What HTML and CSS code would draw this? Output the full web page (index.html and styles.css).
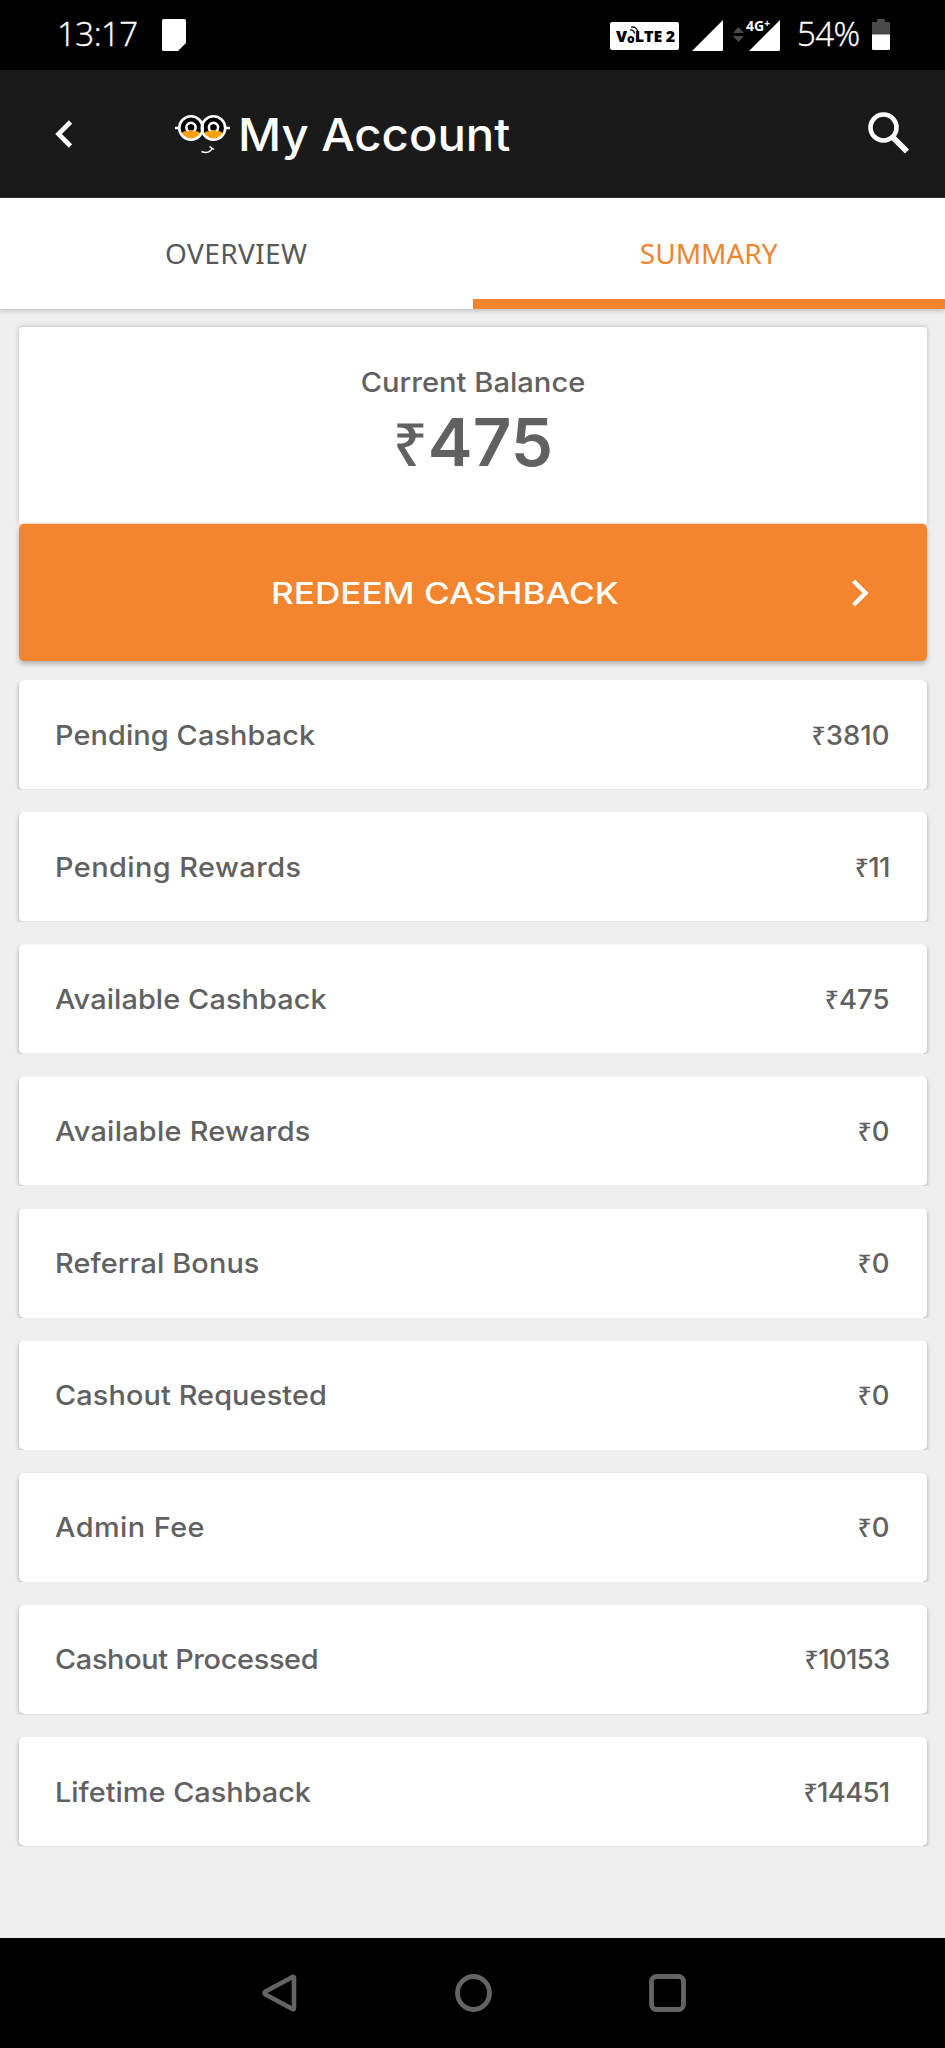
FILE: index.html
```
<!DOCTYPE html>
<html lang="en">
<head>
<meta charset="utf-8">
<title>My Account</title>
<link rel="stylesheet" href="styles.css">
</head>
<body>
<div class="screen">
  <div class="status">
    <span class="clock">13:17</span>
    <svg class="note" width="24" height="32" viewBox="0 0 24 32"><path d="M1.500 0H22.500Q24 0 24 1.500V24L16 32H1.500Q0 32 0 30.500V1.500Q0 0 1.500 0Z" fill="#fff"/></svg>
    <div class="status-right">
      <div class="volte"><span class="vo">V</span><span class="ring">o<svg class="waves" width="9" height="8" viewBox="0 0 9 8"><path d="M0 4.200Q3.500 3 4.500 7.500M1 1.200Q6.500 0 7.700 5.500" fill="none" stroke="#000" stroke-width="1.300"/></svg></span><span class="lte">LTE</span><span class="sim">2</span></div>
      <svg class="signal" width="31" height="31" viewBox="0 0 31 31"><path d="M0 31L31 0V29.500Q31 31 29.500 31Z" fill="#fff"/></svg>
      <svg class="updown" width="11" height="15" viewBox="0 0 11 15"><path d="M0 6L5.500 0L11 6ZM0 9L5.500 15L11 9Z" fill="#4a4a4a"/></svg>
      <div class="signal-g"><svg width="31" height="31" viewBox="0 0 31 31"><path d="M0 31L31 0V29.500Q31 31 29.500 31Z" fill="#fff"/></svg><span class="net">4G<sup>+</sup></span></div>
      <span class="percent">54%</span>
      <svg class="battery" width="18" height="31" viewBox="0 0 18 31"><path d="M5 0H13V3H17Q18 3 18 4V16H0V4Q0 3 1 3H5Z" fill="#4a4a4a"/><path d="M0 15.500H18V29.500Q18 31 16.500 31H1.500Q0 31 0 29.500Z" fill="#fff"/></svg>
    </div>
  </div>
  <header class="appbar">
    <svg class="back" width="18" height="28" viewBox="0 0 18 28"><path d="M15.500 2L3.500 14L15.500 26" fill="none" stroke="#fff" stroke-width="4.600"/></svg>
    <svg class="logo" width="55" height="40" viewBox="0 0 55 40">
      <path d="M0 13H5M50 13H55" stroke="#fff" stroke-width="2.500"/>
      <circle cx="16" cy="13" r="12" fill="#000"/><circle cx="38.500" cy="13" r="12" fill="#000"/>
      <circle cx="16" cy="12.500" r="4.600" fill="none" stroke="#fff" stroke-width="2.600"/><circle cx="38.500" cy="12.500" r="4.600" fill="none" stroke="#fff" stroke-width="2.600"/>
      <path d="M16 9.500V14M14 12.300H18M38.500 9.500V14M36.500 12.300H40.500" stroke="#000" stroke-width="1.800"/>
      <path d="M6 19Q9 15 12.500 16.500Q16 14 19.500 16.500Q23 15 26 19Q22 25 16 25Q10 25 6 19ZM28.500 19Q31.500 15 35 16.500Q38.500 14 42 16.500Q45.500 15 48.500 19Q44.500 25 38.500 25Q32.500 25 28.500 19Z" fill="#ffa007"/>
      <circle cx="16" cy="13" r="11.700" fill="none" stroke="#fff" stroke-width="2.600"/><circle cx="38.500" cy="13" r="11.700" fill="none" stroke="#fff" stroke-width="2.600"/>
      <path d="M26.500 36.500Q34 39.500 37.500 33M34.500 31.500L39 34.500" fill="none" stroke="#fff" stroke-width="1.500"/>
    </svg>
    <h1 class="title">My Account</h1>
    <svg class="search" width="42" height="42" viewBox="0 0 42 42"><circle cx="15.500" cy="15.500" r="13" fill="none" stroke="#fff" stroke-width="4.600"/><path d="M25.500 26L39 39.500" stroke="#fff" stroke-width="5.600"/></svg>
  </header>
  <nav class="tabs">
    <div class="tab"><span class="tab-a">OVERVIEW</span></div>
    <div class="tab active"><span class="tab-b">SUMMARY</span></div>
  </nav>
  <main class="content">
    <section class="balance">
      <div class="balance-label">Current Balance</div>
      <div class="balance-value"><span class="rs-big">₹</span>475</div>
    </section>
    <div class="redeem">
      <span class="redeem-label">REDEEM CASHBACK</span>
      <svg class="go" width="18" height="28" viewBox="0 0 18 28"><path d="M2.500 2L14.500 14L2.500 26" fill="none" stroke="#fff" stroke-width="4.400"/></svg>
    </div>
    <div class="rows">
      <div class="row"><span class="name">Pending Cashback</span><span class="amount"><span class="rs">₹</span>3810</span></div>
      <div class="row"><span class="name">Pending Rewards</span><span class="amount"><span class="rs">₹</span>11</span></div>
      <div class="row"><span class="name">Available Cashback</span><span class="amount"><span class="rs">₹</span>475</span></div>
      <div class="row"><span class="name">Available Rewards</span><span class="amount"><span class="rs">₹</span>0</span></div>
      <div class="row"><span class="name">Referral Bonus</span><span class="amount"><span class="rs">₹</span>0</span></div>
      <div class="row"><span class="name">Cashout Requested</span><span class="amount"><span class="rs">₹</span>0</span></div>
      <div class="row"><span class="name">Admin Fee</span><span class="amount"><span class="rs">₹</span>0</span></div>
      <div class="row"><span class="name">Cashout Processed</span><span class="amount"><span class="rs">₹</span>10153</span></div>
      <div class="row"><span class="name">Lifetime Cashback</span><span class="amount"><span class="rs">₹</span>14451</span></div>
    </div>
  </main>
  <footer class="navbar">
    <svg width="35" height="38" viewBox="0 0 35 38"><path d="M30.500 3Q32 2.500 32 4V34Q32 35.500 30.500 35L3.500 20.500Q2 19 3.500 17.500Z" fill="none" stroke="#646464" stroke-width="4.600" stroke-linejoin="round"/></svg>
    <svg width="37" height="38" viewBox="0 0 37 38"><ellipse cx="18.500" cy="19" rx="16" ry="16.500" fill="none" stroke="#646464" stroke-width="4.800"/></svg>
    <svg width="37" height="38" viewBox="0 0 37 38"><rect x="2.500" y="2.500" width="32" height="33" rx="5" fill="none" stroke="#646464" stroke-width="4.800"/></svg>
  </footer>
</div>
</body>
</html>
```
FILE: styles.css
```
* { box-sizing: border-box; }
body { margin: 0; background: #efefef; font-family: Inter, "Open Sans", sans-serif; color: #616161; }
svg { display: block; flex: none; }
.screen { width: 945px; height: 2048px; display: flex; flex-direction: column; overflow: hidden; }

.status { height: 70px; background: #000; color: #fff; display: flex; padding: 0 55px 0 57px; flex: none; }
.clock { font: 300 33px/68px "Open Sans", sans-serif; width: 105px; letter-spacing: -0.5px; white-space: nowrap; -webkit-text-stroke: .4px #fff; }
.note { margin-top: 19px; }
.status-right { margin-left: auto; display: flex; }
.volte { position: relative; width: 69px; height: 28px; margin-top: 22px; padding: 0 4px 0 6px; background: #fff; color: #000; border-radius: 2px; display: flex; align-items: center; font: 800 16px/28px "Open Sans", sans-serif; }
.ring { position: relative; font-size: 12px; padding-top: 5px; }
.waves { position: absolute; left: 3px; top: 6px; }
.sim { margin-left: auto; }
.signal { margin: 20px 0 0 13px; }
.updown { margin: 27px 0 0 10px; }
.signal-g { position: relative; margin: 20px 0 0 5px; }
.net { position: absolute; left: -3px; top: -2px; font: 700 14px/16px "Noto Sans", sans-serif; white-space: nowrap; }
.net sup { font-size: 10px; line-height: 0; vertical-align: 4px; }
.percent { font: 300 33px/67px "Open Sans", sans-serif; margin-left: 17px; width: 64px; letter-spacing: -0.6px; white-space: nowrap; -webkit-text-stroke: .4px #fff; }
.battery { margin: 19px 0 0 11px; }

.appbar { height: 128px; background: #1a1a1a; color: #fff; display: flex; align-items: flex-start; padding: 0 35px 0 55px; flex: none; border-bottom: 1px solid #333; }
.back { margin-top: 50px; }
.logo { margin: 45px 0 0 102px; }
.title { margin: 0 0 0 8px; font-weight: 500; font-size: 45px; line-height: 129px; white-space: nowrap; transform: scaleX(1.05); transform-origin: left; }
.search { margin: 42px 0 0 auto; }

.tabs { position: relative; height: 111px; background: #fff; display: flex; flex: none; box-shadow: 0 1px 5px rgba(0,0,0,.25); font: 400 28px/90px "Noto Sans", sans-serif; }
.tab { flex: 1; text-align: center; padding-top: 10px; color: #585858; }
.tab-a { letter-spacing: .4px; }
.tab.active { color: #ef852f; border-bottom: 10px solid #f2852e; }

.content { flex: 1; padding: 18px 18.5px 0; background: #efefef; }
.balance { height: 197px; background: #fff; border-radius: 4px 4px 0 0; box-shadow: 0 0 4px rgba(0,0,0,.25); text-align: center; padding-top: 35px; }
.balance-label { font-weight: 500; font-size: 27.500px; line-height: 40px; transform: scaleX(1.06); }
.balance-value { font-weight: 600; font-size: 66px; line-height: 80px; display: flex; justify-content: center; align-items: baseline; transform: scaleX(1.02); }
.rs-big { font: 500 60px/80px "Noto Sans", sans-serif; }
.redeem { position: relative; height: 137px; background: #f2852e; border-radius: 5px; color: #fff; display: flex; align-items: center; padding: 0 58px 0 252px; box-shadow: 0 -1px 1px #f9d4b5, 0 3px 5px rgba(0,0,0,.25); }
.redeem-label { font-weight: 500; font-size: 30px; white-space: nowrap; transform: scaleX(1.17); transform-origin: left; }
.go { margin-left: auto; }
.rows { margin-top: 19px; display: flex; flex-direction: column; gap: 22.600px; }
.row { height: 109.500px; background: #fff; border-radius: 5px; display: flex; justify-content: space-between; align-items: center; padding: 0 37px 0 36.500px; box-shadow: 0 2px 4px rgba(0,0,0,.3); clip-path: inset(0 -8px 0 -8px); font-weight: 500; font-size: 27.500px; }
.name { letter-spacing: .1px; transform: scaleX(1.05); transform-origin: left; }
.row:nth-child(2) .name, .row:nth-child(7) .name { letter-spacing: .42px; }
.row:nth-child(4) .name { letter-spacing: .25px; }
.row:nth-child(8) .name { letter-spacing: -.32px; }
.row:nth-child(9) .name { letter-spacing: 0; }
.row:nth-child(8) .amount, .row:nth-child(9) .amount { letter-spacing: -.7px; }
.row:nth-child(2) .amount { letter-spacing: -.8px; }
.rs { font: 500 25px/40px "Noto Sans", sans-serif; }

.navbar { height: 110.500px; background: #000; display: flex; padding: 36px 259px 0 262px; justify-content: space-between; flex: none; }
```
